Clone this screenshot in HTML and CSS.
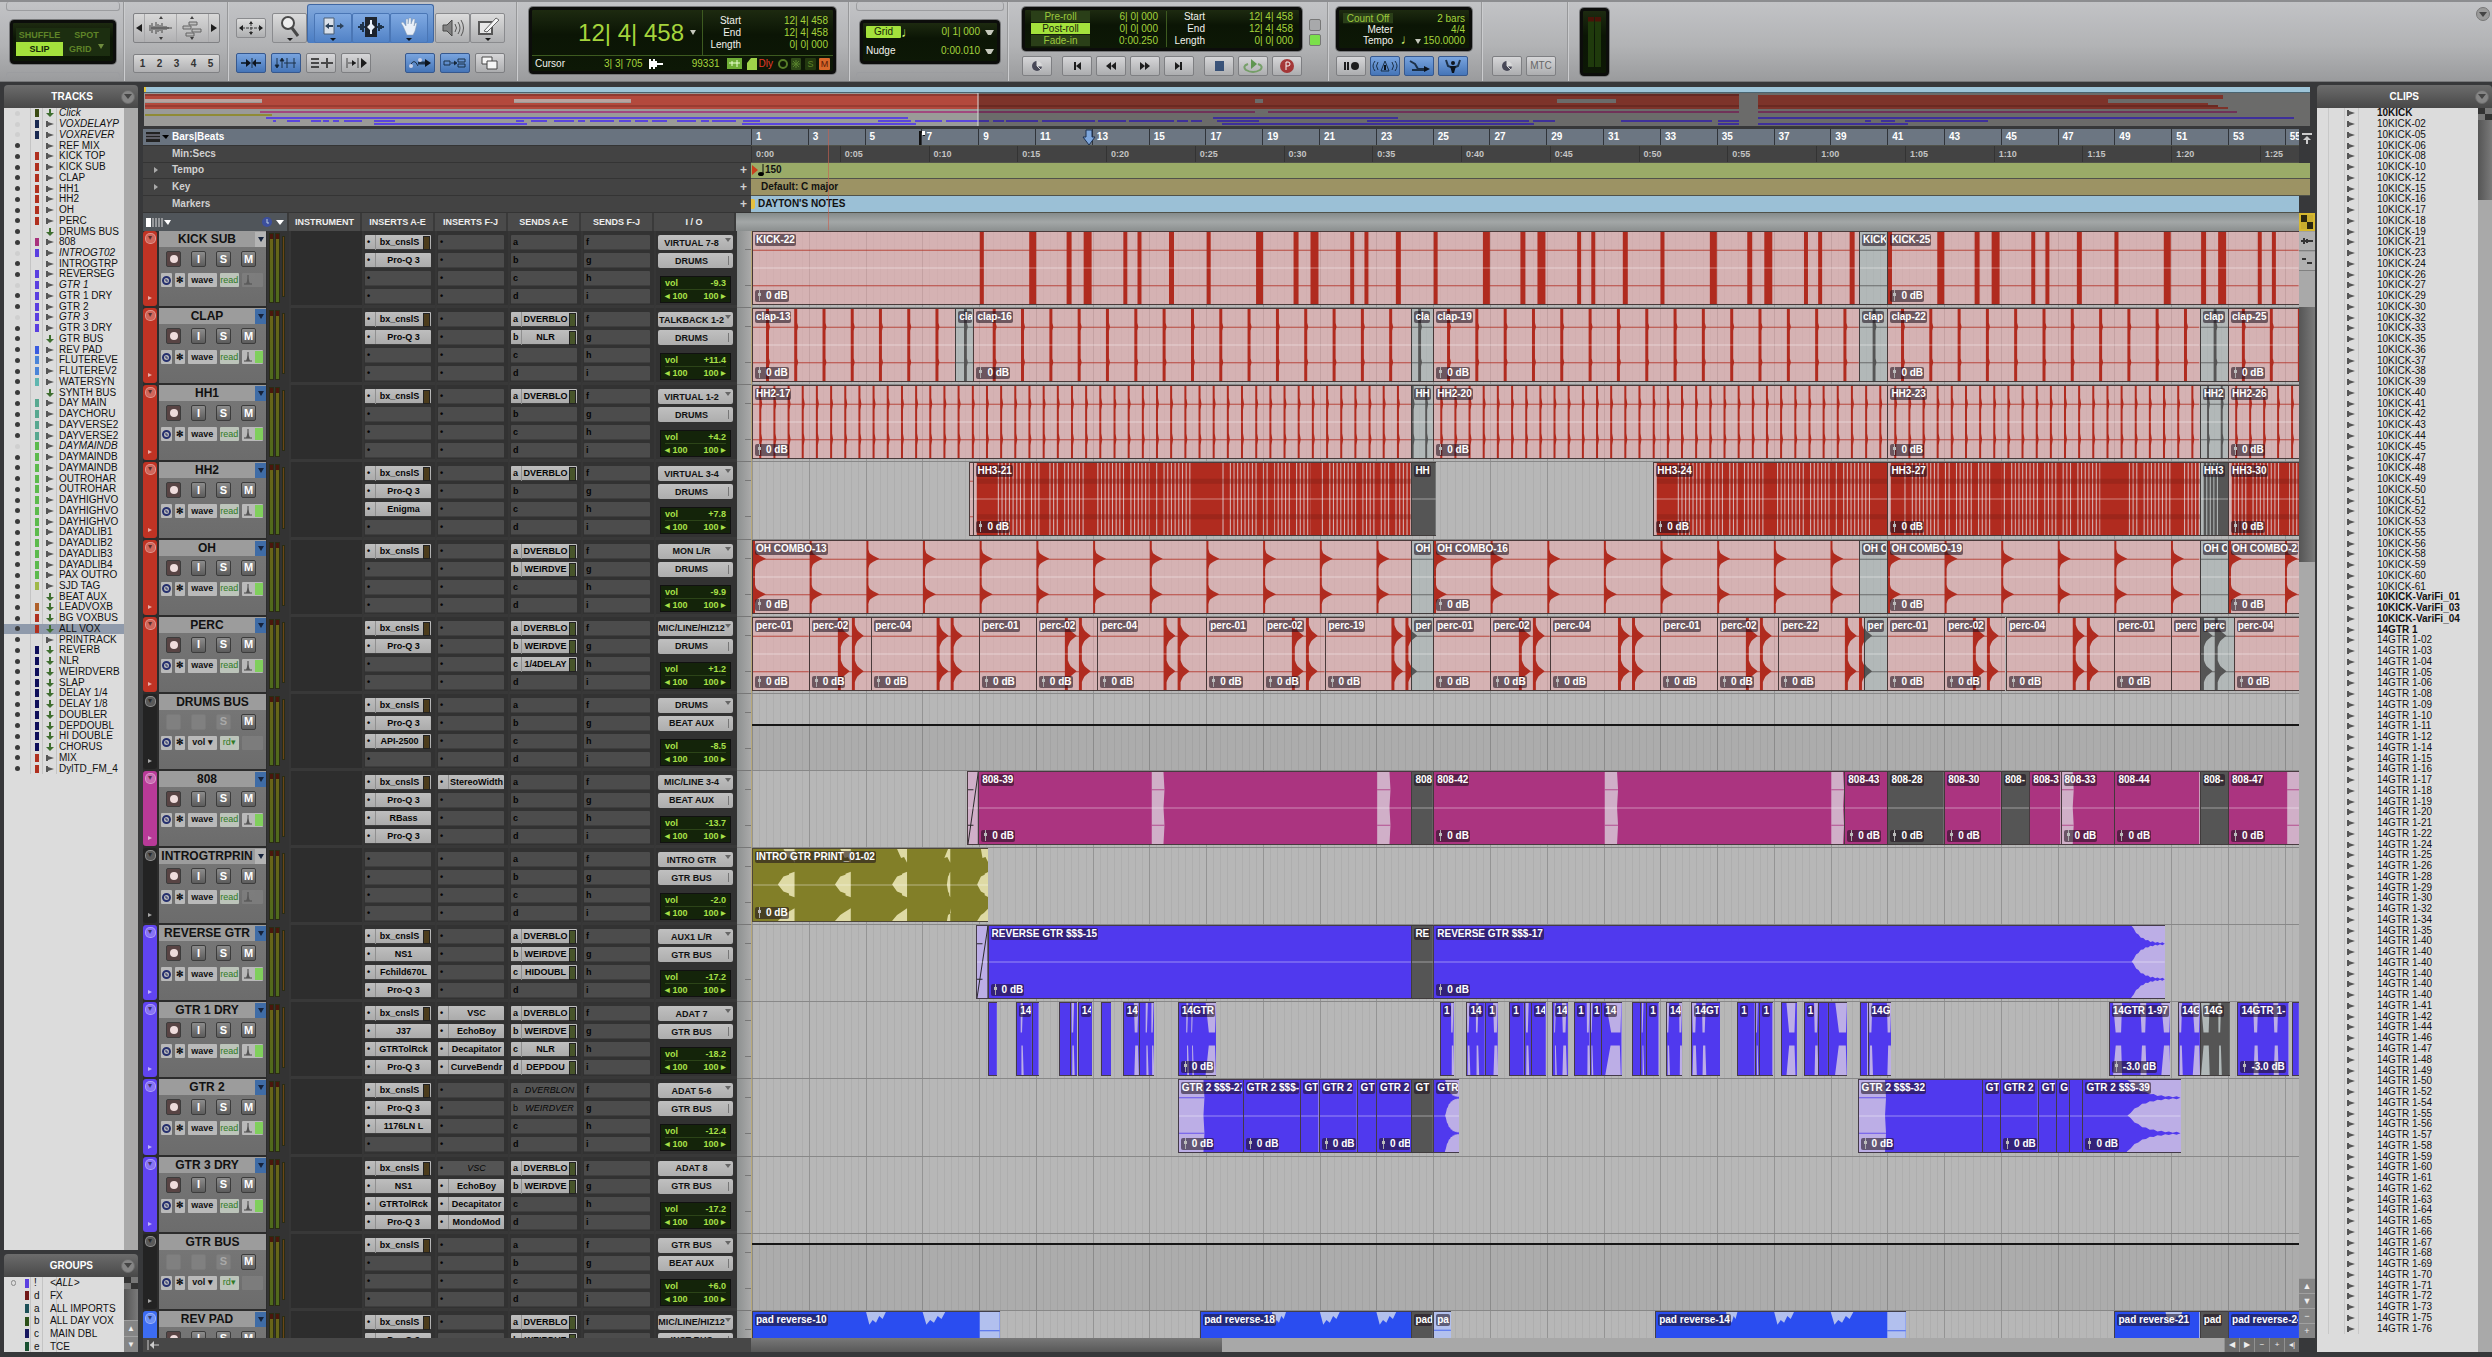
FILE: index.html
```html
<!DOCTYPE html>
<html lang="en">
<head>
<meta charset="utf-8">
<title>Edit window</title>
<link rel="stylesheet" href="styles.css">
</head>
<body>
<header class="toolbar">
  <section class="tb tb-modes framed">
    <div class="lcd modes">
      <button>SHUFFLE</button><button>SPOT</button>
      <button class="on">SLIP</button><button>GRID <i class="caret"></i></button>
    </div>
  </section>
  <section class="tb tb-zoom">
    <div class="btn-strip tall">
      <button aria-label="Zoom out"><svg width="6" height="8"><path d="M6 0v8L0 4z"/></svg></button>
      <button class="wide" aria-label="Audio zoom"><svg width="24" height="24" viewBox="0 0 24 24"><path d="M12 0l2 3h-4zM12 24l2-3h-4z" opacity=".8"/><path d="M1 9v6M3 7v10M5 10v4M7 6v12M9 8v8M11 9v6M13 7v10M15 10v4M17 10v4M19 11v2M2 12h21" stroke="#333" fill="none"/></svg></button>
      <button class="wide" aria-label="MIDI zoom"><svg width="24" height="24" viewBox="0 0 24 24"><path d="M12 0l2 3h-4zM12 24l2-3h-4z" opacity=".8"/><path d="M9 6h8v3H9zM3 10h8v3H3zM12 13h9v3h-9zM6 17h8v3H6z" fill="#bbb" stroke="#555"/></svg></button>
      <button aria-label="Zoom in"><svg width="6" height="8"><path d="M0 0v8l6-4z"/></svg></button>
    </div>
    <div class="btn-strip presets"><button>1</button><button>2</button><button>3</button><button>4</button><button>5</button></div>
  </section>
  <section class="tb tb-tools">
    <div class="tool-row">
      <button class="tool small" aria-label="Zoom toggle"><svg width="24" height="14" viewBox="0 0 24 14"><path d="M0 7l4-3v6zM24 7l-4-3v6zM12 0l2 3h-4zM12 14l2-3h-4z"/><path d="M3 7h18M12 2v10" stroke="#222" stroke-dasharray="3 1"/></svg></button>
      <button class="tool" aria-label="Zoomer"><svg width="24" height="26" viewBox="0 0 24 26"><circle cx="10" cy="8" r="6" fill="#f4f4f4" stroke="#333" stroke-width="2"/><path d="M14 13l6 8" stroke="#333" stroke-width="3"/><path d="M9 23h6l-3 3z"/></svg></button>
      <div class="smart">
        <button class="tool blue" aria-label="Trim"><svg width="26" height="26" viewBox="0 0 26 26"><path d="M4 3h10v16H4z" fill="#eee" stroke="#456"/><path d="M5 11l4-3v2h4v2H9v2zM24 11l-4-3v2h-3v2h3v2z" fill="#234"/><path d="M10 23h6l-3 3z"/></svg></button>
        <button class="tool blue" aria-label="Selector"><svg width="26" height="26" viewBox="0 0 26 26"><path d="M7 2h12v20H7z" fill="#111"/><path d="M0 12h7M19 12h7M3 9v6M5 7v10M21 8v8M23 10v4" stroke="#123" stroke-width="2"/><path d="M12 5h2v4l3 3-3 3v4h-2v-4l-3-3 3-3z" fill="#fff"/></svg></button>
        <button class="tool blue" aria-label="Grabber"><svg width="26" height="26" viewBox="0 0 26 26"><path d="M7 11L5 8l2-1 3 4V4h2v5l1-6h2v6l2-5h2l-1 7 1-3h2l-2 8-2 4h-6z" fill="#fff" stroke="#89a" stroke-width=".5"/><path d="M10 23h6l-3 3z"/></svg></button>
      </div>
      <button class="tool" aria-label="Scrubber"><svg width="24" height="24" viewBox="0 0 24 24"><path d="M2 9h4l5-5v16l-5-5H2z" fill="#777" stroke="#333"/><path d="M14 8q3 4 0 8M17 6q4 6 0 12M20 4q5 8 0 16" fill="none" stroke="#444"/></svg></button>
      <button class="tool" aria-label="Pencil"><svg width="26" height="26" viewBox="0 0 26 26"><path d="M4 7h13v12H4z" fill="#eee" stroke="#444" stroke-width="2"/><path d="M9 16L21 3l3 2-12 12z" fill="#fff" stroke="#555"/><path d="M10 23h6l-3 3z"/></svg></button>
    </div>
    <div class="tool-row second">
      <button class="key blue" aria-label="Tab to transients"><svg width="24" height="12"><path d="M2 6h7M14 6h8" stroke="#123" stroke-width="2"/><path d="M7 2l5 4-5 4zM17 2l-4 4 4 4z"/><path d="M13 1v10" stroke="#123"/></svg></button>
      <button class="key blue" aria-label="Link timeline"><svg width="24" height="12"><path d="M3 1v9M8 2v9M13 1v10M20 1v10" stroke="#123"/><path d="M1 8h4l-2 3zM6 4h4L8 1zM10 6h12" stroke="#123"/></svg></button>
      <button class="key" aria-label="Link track"><svg width="24" height="12"><path d="M2 2h8M2 6h8M2 10h8M18 1v10M12 6h12" stroke="#333" stroke-width="2"/></svg></button>
      <button class="key" aria-label="Insertion follows playback"><svg width="24" height="12"><path d="M3 1v10M14 1v10M4 6h8" stroke="#333"/><path d="M8 3l4 3-4 3zM17 1l6 5-6 5z"/></svg></button>
      <button class="key blue apart" aria-label="Automation follows edit"><svg width="24" height="12"><path d="M2 9q4-9 8 0" fill="none" stroke="#123"/><path d="M10 6h8" stroke="#123" stroke-width="3"/><path d="M17 2l6 4-6 4z"/><circle cx="3" cy="9" r="2" fill="#dde"/><circle cx="12" cy="3" r="2" fill="#dde"/></svg></button>
      <button class="key blue" aria-label="Mirrored editing"><svg width="24" height="12"><path d="M1 4h6v4H1zM15 2h7v3h-7zM15 7h7v3h-7z" fill="none" stroke="#123"/><path d="M8 6h5M11 4l3 2-3 2" stroke="#123"/></svg></button>
      <button class="key" aria-label="Layered editing"><svg width="20" height="14"><path d="M2 1h10v7H2z" fill="#fff" stroke="#333"/><path d="M7 5h10v8H7z" fill="#fff" stroke="#333"/></svg></button>
    </div>
  </section>
  <section class="tb tb-counter">
    <div class="lcd counter">
      <div class="main-count"><b>12| 4| 458</b><i class="caret"></i></div>
      <dl class="range"><dt>Start</dt><dd>12| 4| 458</dd><dt>End</dt><dd>12| 4| 458</dd><dt>Length</dt><dd>0| 0| 000</dd></dl>
      <div class="cursor-row">
        <span class="white">Cursor</span><span class="cur">3| 3| 705</span>
        <svg width="15" height="12"><path d="M0 1h2v10H0zM2 3h2v6H2zM4 1h2v10H4zM6 3h2v6H6zM8 5h6v2H8z" fill="#fff"/></svg>
        <span class="level">99331</span>
        <svg width="30" height="14"><path d="M0 1h15v11H0z" fill="#6fae36"/><path d="M2 6h11M5 4v5M10 3v7" stroke="#eaffd0"/><path d="M24 1h6v12H20V6z" fill="#9fd44a"/></svg>
        <span class="dly">Dly</span>
        <svg width="24" height="14"><circle cx="5" cy="7" r="4" fill="none" stroke="#567d28" stroke-width="2"/><rect x="13" y="1" width="10" height="12" rx="1" fill="#2f4a18"/><path d="M18 3v8M14 7h8M15 4l6 6M21 4l-6 6" stroke="#58822c"/></svg>
        <span class="solo">S</span><span class="solo mute">M</span>
      </div>
    </div>
  </section>
  <section class="tb tb-grid framed">
    <div class="lcd gridnudge">
      <span class="chip on">Grid</span><span class="note">♩</span><output>0| 1| 000</output><i class="caret"></i>
      <span class="white">Nudge</span><span></span><output>0:00.010</output><i class="caret"></i>
    </div>
  </section>
  <section class="tb tb-transport">
    <div class="transport-top">
      <div class="lcd rolls">
        <button>Pre-roll</button><output class="ruled">6| 0| 000</output><span class="white">Start</span><output>12| 4| 458</output>
        <button class="on">Post-roll</button><output class="ruled">0| 0| 000</output><span class="white">End</span><output>12| 4| 458</output>
        <button>Fade-in</button><output class="ruled">0:00.250</output><span class="white">Length</span><output>0| 0| 000</output>
      </div>
      <div class="lamps"><i></i><i class="lit"></i></div>
    </div>
    <div class="keys">
      <button class="key first" aria-label="Online"><svg width="12" height="12"><circle cx="6" cy="6" r="5" fill="#334"/><path d="M6 6V1a5 5 0 015 5zM6 6l4 4" fill="#ddd" stroke="#ddd"/></svg></button>
      <button class="key" aria-label="Return to zero"><svg width="12" height="12"><path d="M3 2h2v8H3zM10 2v8L5 6z"/></svg></button>
      <button class="key" aria-label="Rewind"><svg width="12" height="12"><path d="M6 2v8L1 6zM11 2v8L6 6z"/></svg></button>
      <button class="key" aria-label="Fast forward"><svg width="12" height="12"><path d="M1 2v8l5-4zM6 2v8l5-4z"/></svg></button>
      <button class="key" aria-label="Go to end"><svg width="12" height="12"><path d="M7 2h2v8H7zM2 2v8l5-4z"/></svg></button>
      <button class="key later" aria-label="Stop"><svg width="12" height="12"><path d="M2 1h9v10H2z" fill="#23406c"/></svg></button>
      <button class="key" aria-label="Play"><svg width="22" height="16"><path d="M6 6Q0 8 4 12q7 4 14 0q4-4-2-6" fill="none" stroke="#6a9a5a" stroke-width="2"/><path d="M9 1v10l6-5z" fill="#4e8e3c"/></svg></button>
      <button class="key" aria-label="Record"><svg width="16" height="16"><circle cx="8" cy="8" r="7" fill="#a02020"/><path d="M7 12V4h2q2 0 2 2t-2 2H7" fill="none" stroke="#fff"/></svg></button>
    </div>
  </section>
  <section class="tb tb-count">
    <div class="lcd count">
      <button>Count Off</button><output>2 bars</output>
      <span class="white">Meter</span><output>4/4</output>
      <span class="white">Tempo</span><output><span class="note">♩</span><i class="caret"></i> 150.0000</output>
    </div>
    <div class="keys">
      <button class="key" aria-label="Wait for note"><svg width="18" height="12"><path d="M2 2h2v8H2zM5 2h2v8H5z"/><circle cx="13" cy="6" r="4"/></svg></button>
      <button class="key blue" aria-label="Metronome"><svg width="26" height="14"><path d="M13 2l4 10H9zM6 3q-3 4 0 8M3 2q-4 5 0 10M20 3q3 4 0 8M23 2q4 5 0 10" fill="none" stroke="#123"/><path d="M12 6h2v5h-2z"/></svg></button>
      <button class="key blue" aria-label="Count off"><svg width="22" height="14"><path d="M2 2l5 3 3 5h7M4 11h14" fill="none" stroke="#123" stroke-width="2"/><path d="M16 7l6 3-6 3z"/></svg></button>
      <button class="key blue" aria-label="Conductor"><svg width="20" height="16"><circle cx="10" cy="5" r="2"/><path d="M3 2l2 6 5 2 5-2 2-6" fill="none" stroke="#123" stroke-width="2"/><path d="M7 8h6l-2 7H9z"/></svg></button>
    </div>
  </section>
  <section class="tb tb-sync">
    <div class="keys">
      <button class="key" aria-label="External clock"><svg width="12" height="12"><circle cx="6" cy="6" r="5" fill="#334"/><path d="M6 6V1a5 5 0 015 5zM6 6l4 4" fill="#ddd" stroke="#ddd"/></svg></button>
      <button class="key mtc">MTC</button>
    </div>
  </section>
  <section class="tb tb-meter"><div class="lcd master"><i></i><i></i></div></section>
  <button class="round" aria-label="Toolbar menu"></button>
</header>

<main class="workspace">
  <aside class="side">
    <section class="panel grow">
      <h2>TRACKS<button class="round" aria-label="Tracks menu"></button></h2>
      <div class="panel-body">
        <ul class="track-list" id="trackList"></ul>
        <div class="vbar"></div>
      </div>
    </section>
    <section class="panel">
      <h2>GROUPS<button class="round" aria-label="Groups menu"></button></h2>
      <div class="panel-body groups">
        <ul class="group-list" id="groupList"></ul>
        <div class="vbar"><i class="az"></i><span class="thumb short"></span><button aria-label="Scroll up">▲</button><button aria-label="Scroll down">▼</button></div>
      </div>
    </section>
  </aside>

  <section class="edit">
    <div class="universe" id="universe"></div>
    <div class="rulers">
      <div class="ruler-names">
        <div class="sel"><svg width="24" height="12"><path d="M1 1h14v10H1z" fill="#222"/><path d="M1 4h14M1 7h14" stroke="#99a"/><path d="M17 4h7l-3 4z"/></svg>Bars|Beats</div>
        <div>Min:Secs</div>
        <div><i class="tri"></i>Tempo<b>+</b></div>
        <div><i class="tri"></i>Key<b>+</b></div>
        <div>Markers<b>+</b></div>
      </div>
      <div class="ruler-lines" id="rulers">
        <div class="r-bars" id="bars"></div>
        <div class="r-time" id="times"></div>
        <div class="r-tempo"><svg width="14" height="14"><path d="M1 2l6 5-6 5z" fill="#c8401c"/><path d="M12 1v10" stroke="#111"/><ellipse cx="10" cy="11" rx="3" ry="2"/></svg>150</div>
        <div class="r-key">Default: C major</div>
        <div class="r-markers"><i></i>DAYTON'S NOTES</div>
      </div>
      <div class="ruler-end"><svg width="10" height="12"><path d="M0 0h10v2H0zM5 3l4 4H6v4H4V7H1z"/></svg></div>
    </div>
    <div class="col-heads">
      <div class="views"><svg width="26" height="11"><path d="M1 1h5v9H1z" fill="#fff"/><path d="M8 1v9M11 1v9M14 1v9M17 1v9" stroke="#ddd"/><path d="M19 3h7l-3 5z" fill="#fff"/></svg><svg width="24" height="12"><circle cx="6" cy="6" r="5" fill="#3c4f9c"/><path d="M6 3v4h2" stroke="#bcd" fill="none"/><path d="M15 4h8l-4 5z" fill="#fff"/></svg></div>
      <div>INSTRUMENT</div><div>INSERTS A-E</div><div>INSERTS F-J</div><div>SENDS A-E</div><div>SENDS F-J</div><div>I / O</div>
      <div class="strip-top"></div>
      <div class="az yellow"></div>
    </div>
    <div class="arrange">
      <div class="tracks" id="tracks"></div>
      <div class="vbar main-v">
        <button aria-label="Audio zoom"><svg width="12" height="10"><path d="M0 5h12M3 2v6M6 3v4" stroke="#333" stroke-width="2"/></svg></button>
        <button aria-label="MIDI zoom"><svg width="12" height="10"><path d="M1 3h4M6 7h5" stroke="#333" stroke-width="2"/></svg></button>
        <span class="gap"></span><span class="thumb long"></span><span class="fill"></span>
        <button aria-label="Scroll up">▲</button><button aria-label="Scroll down">▼</button><button>−</button><button>+</button>
      </div>
    </div>
    <div class="hbar">
      <div class="hleft"><svg width="12" height="10"><path d="M1 0v10M3 5h9" stroke="#ccc"/><path d="M7 1L3 5l4 4z" fill="#ccc"/></svg></div>
      <div class="htrack"><span class="hthumb"></span></div>
      <div class="hbtns"><button aria-label="Scroll left">◀</button><button aria-label="Scroll right">▶</button><button>−</button><button>+</button><button aria-label="Track size">◂|</button></div>
    </div>
  </section>

  <aside class="panel clips">
    <h2>CLIPS<button class="round" aria-label="Clips menu"></button></h2>
    <div class="panel-body">
      <ul class="clip-list" id="clipList"></ul>
      <div class="vbar"><i class="az"></i><span class="thumb"></span></div>
    </div>
  </aside>
</main>
<script src="app.js"></script>
</body>
</html>
```

FILE: styles.css
```css
* { box-sizing: border-box; }
html, body { height: 100%; }
body {
  margin: 0;
  display: flex;
  flex-direction: column;
  background: #37383a;
  color: #111;
  font: 10px/12px "Liberation Sans", Arial, sans-serif;
  overflow: hidden;
}
button, select, output { font: inherit; color: inherit; }
button, select { margin: 0; padding: 0; border: 0; background: none; appearance: none; border-radius: 0; white-space: nowrap; }
ul, dl, dd, h2 { margin: 0; padding: 0; list-style: none; }
svg { display: block; flex: none; }

/* toolbar */
.toolbar {
  position: relative;
  display: flex;
  flex: none;
  height: 82px;
  border-top: 2px solid #8c8d90;
  border-bottom: 1px solid #77787a;
  background: linear-gradient(#c2c3c6, #b2b3b5 55%, #9a9b9d);
}
.tb { flex: none; border-right: 1px solid #97989a; box-shadow: 1px 0 #cbccce; padding-top: 5px; }
.tb-modes { width: 124px; padding: 0 7px 0 10px; }
.tb-zoom { width: 104px; padding: 11px 7px 0 9px; }
.tb-tools { width: 289px; padding: 2px 0 0 8px; }
.tb-counter { width: 332px; padding-left: 12px; }
.tb-grid { width: 159px; padding: 0 7px 0 11px; }
.tb-transport { width: 320px; padding-left: 14px; }
.tb-count { width: 154px; padding-left: 8px; }
.tb-sync { width: 86px; padding: 54px 0 0 10px; }
.tb-meter { padding: 6px 0 0 12px; border: 0; box-shadow: none; }
.toolbar button > svg { opacity: .85; }
.framed { display: flex; flex-direction: column; justify-content: space-between; }
.framed::before, .framed::after { content: ""; height: 8px; border: 1px solid #9c9da0; border-radius: 3px; margin: 0 -4px; }
.framed::before { border-top: 0; }
.framed::after { border-bottom: 0; }

.lcd {
  border: 3px solid #0c0d0b;
  border-radius: 4px;
  box-shadow: 0 0 0 1px #77787a;
  background: linear-gradient(#1d2a10, #0b1505 40%, #0d1806);
  color: #a5d43c;
}
.white { color: #f2f2ec; }
.caret { display: inline-block; border: 3px solid transparent; border-top: 5px solid #c6c9bd; border-bottom: 0; }
.modes { height: 44px; padding: 5px 3px; display: grid; grid-template-columns: 1fr 1fr; grid-template-rows: 1fr 1fr; font-size: 9px; font-weight: bold; }
.modes button { color: #5f8428; background: #1c2e10; }
.modes .on, .rolls .on, .chip.on { background: #a4e23c; color: #16250a; }
.modes .caret { margin-left: 4px; border-top-color: #6f8b3e; vertical-align: 3px; }

.btn-strip { display: flex; border: 1px solid #808184; border-radius: 2px; background: linear-gradient(#d8d8d8, #b0b0b2); }
.btn-strip button { flex: 1; display: grid; place-items: center; border-right: 1px solid #a8a8aa; }
.btn-strip button:last-child { border: 0; }
.btn-strip .wide { flex: 3; }
.tall { height: 30px; }
.presets { height: 19px; margin-top: 11px; font-weight: bold; color: #333; }
.presets button { border: 0; }
.tool-row { display: flex; align-items: flex-end; height: 39px; }
.tool { display: grid; place-items: center; width: 35px; height: 30px; border: 1px solid #8a8b8e; border-radius: 2px; background: linear-gradient(#dcdcdc, #aeafb1); }
.tool.small { width: 30px; height: 20px; margin: 0 6px 5px 0; }
.tool.blue { width: 38px; background: linear-gradient(#7fa9e2, #5182c6); border-color: #4a76b5; }
.smart { display: flex; justify-content: center; align-items: flex-end; width: 127px; height: 39px; margin-right: 1px; border: 1px solid #3f67a3; border-bottom-width: 0; border-radius: 3px; background: linear-gradient(#83a9dc, #4a7dc4); }
.key { display: grid; place-items: center; width: 30px; height: 20px; border: 1px solid #7e7f82; border-radius: 2px; background: linear-gradient(#d6d6d8, #acadaf); color: #333; }
.key.blue { background: linear-gradient(#79a4de, #4575b8); border-color: #36588e; }
.second { height: 20px; margin-top: 10px; gap: 5px; }
.second .apart { margin-left: 29px; }
.keys { display: flex; gap: 4px; margin-top: 5px; }
.tb-transport .first { margin-right: 6px; }
.tb-transport .later { margin-left: 6px; }
.tb-sync .keys { margin: 0; }
.mtc { color: #666; }

.counter { width: 307px; height: 67px; display: grid; grid-template-columns: 171px 1fr; grid-template-rows: 45px 1fr; }
.main-count { display: flex; align-items: center; justify-content: flex-end; gap: 6px; padding-right: 6px; border-right: 1px solid #3d5a20; }
.main-count b { font-size: 24px; font-weight: normal; }
.range { display: grid; grid-template-columns: 38px 1fr; grid-auto-rows: 12px; align-content: center; text-align: right; padding-right: 5px; }
.range dt { color: #f2f2ec; }
.cursor-row { grid-column: 1 / 3; display: flex; align-items: center; border-top: 1px solid #3d5a20; padding: 0 3px; }
.cur { margin: 0 6px 0 auto; }
.level { width: 56px; text-align: right; margin-right: 7px; }
.dly { margin: 0 5px 0 2px; color: #e63a2a; }
.solo { width: 11px; height: 12px; margin-left: 3px; border-radius: 1px; text-align: center; color: #5f8428; background: #23380f; font-size: 9px; }
.solo.mute { background: #d8672a; color: #5a1808; }
.gridnudge { height: 44px; padding: 0 3px; display: grid; grid-template-columns: 35px 14px 1fr 14px; grid-template-rows: 1fr 1fr; align-items: center; text-align: right; }
.gridnudge .chip { height: 12px; border-radius: 1px; text-align: center; }
.gridnudge .white { text-align: left; }
.gridnudge .caret { margin-left: 5px; }
.note { font-size: 14px; color: #c9ea6a; }
.transport-top { display: flex; gap: 7px; }
.rolls { width: 280px; height: 44px; padding: 1px 6px; display: grid; grid-template-columns: 59px 77px 38px 1fr; grid-template-rows: repeat(3, 12px); text-align: right; }
.rolls button, .count button { background: #2a3f18; border-bottom: 1px solid #14200a; color: #9cc83c; line-height: 11px; }
.ruled { border-right: 1px solid #3d5a20; padding-right: 8px; }
.lamps { display: grid; gap: 3px; align-content: center; padding-top: 6px; }
.lamps i { width: 12px; height: 12px; border: 1px solid #777; border-radius: 2px; background: #a8a9ab; }
.lamps .lit { background: #7be04a; }
.count { width: 136px; height: 44px; padding: 3px 4px; display: grid; grid-template-columns: 50px 1fr; grid-template-rows: repeat(3, 11px); text-align: right; line-height: 11px; }
.count .note { line-height: 8px; }
.master { width: 29px; height: 68px; padding: 6px 4px; display: flex; gap: 1px; justify-content: center; }
.master i { width: 6px; background: linear-gradient(#4a1208 8%, #1f3a0c 10%); }
.round { width: 14px; height: 14px; border-radius: 7px; border: 1px solid #777; background: #9a9a9a; display: grid; place-items: center; }
.round::before { content: ""; border: 4px solid transparent; border-top: 5px solid #444; border-bottom: 0; }
.toolbar > .round { margin: 5px 2px 0 auto; }

/* panels */
.workspace { flex: 1; min-height: 0; display: flex; padding: 3px 0 5px 4px; }
.side { width: 134px; flex: none; margin-right: 5px; display: flex; flex-direction: column; gap: 4px; }
.panel { display: flex; flex-direction: column; }
.panel.grow { flex: 1; min-height: 0; }
.panel h2 { flex: none; height: 23px; display: flex; align-items: center; justify-content: flex-end; font-size: 10px; color: #fff; border-radius: 4px 4px 0 0; background: linear-gradient(#6c6c6c, #484848); }
.panel h2 .round { margin: 0 3px 0 28px; background: #858585; border-color: #6a6a6a; }
.clips h2 .round { margin-left: 56px; }
.panel-body { flex: 1; min-height: 0; display: flex; background: #dcdcdc; overflow: hidden; }
.groups { height: 75px; flex: none; }
.vbar { display: flex; flex-direction: column; width: 14px; flex: none; background: #a9a9a9; }
.vbar button { height: 16px; flex: none; background: #858585; border-top: 1px solid #a0a0a0; color: #eee; font-size: 8px; line-height: 14px; text-align: center; }
.thumb { display: block; flex: none; height: 80px; background: linear-gradient(90deg, #555, #7a7a7a); }
.thumb.short { flex: 1; height: auto; }
.az { flex: none; height: 12px; background: conic-gradient(#777 25%, #333 0 50%, #777 0 75%, #333 0); }
.track-list, .group-list, .clip-list { flex: 1; display: grid; align-content: start; }
.track-list { height: 666px; grid-auto-rows: 1fr; }
.track-list, .group-list { background: linear-gradient(90deg, transparent 26px, #c4c4c4 26px 27px, transparent 27px 38px, #c4c4c4 38px 39px, transparent 39px 52px, #c4c4c4 52px 53px, transparent 53px); }
.panel.grow .panel-body { align-items: flex-start; }
.panel.grow .vbar { align-self: stretch; }
.track-list li { display: grid; grid-template-columns: 26px 13px 13px 1fr; align-items: center; justify-items: center; min-height: 0; line-height: 10px; }
.track-list span { justify-self: start; padding-left: 3px; white-space: nowrap; }
.track-list .off span { font-style: italic; }
.track-list .off .dot { background: #cfcfcf; }
.track-list .sel { background: #8f9aab; }
.dot { width: 5px; height: 5px; border-radius: 3px; background: #3a3a3a; }
.tag { width: 4px; height: 8px; }
.group-list { grid-auto-rows: 1fr; height: 76px; }
.group-list li { display: grid; grid-template-columns: 19px 11px 16px 1fr; align-items: center; white-space: nowrap; }
.group-list i { width: 4px; height: 9px; margin-left: 2px; }
.group-list .ring { width: 5px; height: 6px; border: 1px solid #888; border-radius: 3px; margin-left: 7px; }
.clips { width: 175px; flex: none; margin-left: 2px; }
.clip-list { grid-auto-rows: 1fr; height: 1226px; background: linear-gradient(90deg, transparent 11px, #c8c8c8 11px 12px, transparent 12px 27px, #c8c8c8 27px 28px, transparent 28px 41px, #c8c8c8 41px 42px, transparent 42px); }
.clip-list li { display: grid; grid-template-columns: 60px 1fr; align-items: center; line-height: 10px; white-space: nowrap; min-height: 0; }
.clip-list svg { margin-left: 30px; }
.clip-list .whole { font-weight: bold; }

/* edit window */
.edit { flex: 1; min-width: 0; display: flex; flex-direction: column; padding-top: 2px; }
.universe { height: 39px; flex: none; margin: 0 5px 3px 1px; }
.universe svg { width: 100%; height: 100%; }
.rulers { display: flex; flex: none; height: 84px; color: #d0d0d0; font-weight: bold; }
.ruler-names { width: 608px; display: grid; grid-template-rows: repeat(5, 1fr); flex: none; }
.ruler-names div { position: relative; display: flex; align-items: center; padding-left: 29px; background: #434343; border-bottom: 1px solid #343434; }
.ruler-names .sel { background: #69737f; padding-left: 2px; gap: 3px; color: #fff; }
.ruler-names b { margin-left: auto; padding-right: 4px; font-size: 12px; }
.tri { position: absolute; left: 11px; border: 3px solid transparent; border-left: 4px solid #aaa; border-right: 0; }
.ruler-lines { position: relative; flex: 1; min-width: 0; display: grid; grid-template-rows: repeat(5, 1fr); }
.ruler-lines > div { position: relative; overflow: hidden; border-bottom: 1px solid #50524a; }
.ruler-lines .r-bars { background: #6c7682; }
.ruler-lines .r-time { background: #434343; }
.r-bars span, .r-time span { position: absolute; top: 0; bottom: 0; padding: 2px 0 0 4px; border-left: 1px solid #30343a; color: #fff; }
.r-time span { color: #c4c4c4; font-size: 9px; border-color: #333; }
.r-tempo, .r-key, .r-markers { color: #111; display: flex; align-items: center; margin-right: -11px; }
.r-tempo { background: #9aab68; }
.r-key { background: #9c9364; padding-left: 10px; }
.r-markers { background: #9bc0d6; gap: 3px; margin-right: 0; }
.r-markers i { width: 4px; height: 10px; border-radius: 0 2px 2px 0; background: #e6c040; }
.playhead { position: absolute; top: 0; bottom: -17px; width: 1px; background: #c86050a0; }
.start-arrow { position: absolute; top: 0; margin-left: -7px; }
.ruler-end { flex: none; width: 16px; padding: 4px 0 0 3px; }
.ruler-end svg { fill: #ccc; }

.track { display: grid; min-height: 0; grid-template-columns: 14px 110px 22px repeat(5, 73px) 83px 14px minmax(0, 1fr); }
.col-heads { display: grid; flex: none; height: 18px; grid-template-columns: 146px repeat(5, 73px) 82px minmax(0, 1fr) 16px; color: #eee; font-size: 9px; font-weight: bold; background: #4a4a4a; }
.col-heads > div { display: grid; place-items: center; border-right: 2px solid #3a3a3a; }
.col-heads .views { display: flex; justify-content: space-between; padding: 0 2px; background: #50555a; }
.col-heads .strip-top { border: 0; background: linear-gradient(#858b8b, #a3a7a7 50%, #8b8f8f); }
.col-heads .yellow { height: 18px; border: 2px solid #d6b82e; background: conic-gradient(#c9ad2e 25%, #2b2710 0 50%, #c9ad2e 0 75%, #2b2710 0); }

.arrange { flex: 1; min-height: 0; display: flex; overflow: hidden; }
.tracks { flex: 1; min-width: 0; align-self: flex-start; height: 1157px; display: grid; grid-template-rows: repeat(15, 1fr); --bars: 54.5; background: #2c2c2c; }
.strip { margin: 0 0 2px; border-radius: 3px; display: flex; flex-direction: column; justify-content: space-between; align-items: center; padding: 2px 0 6px; }
.strip::before { content: "▾"; width: 9px; height: 9px; border-radius: 5px; background: #ffffff40; border: 1px solid #ffffff50; color: #00000090; font-size: 8px; line-height: 7px; text-align: center; }
.strip::after { content: ""; border: 2px solid transparent; border-left: 4px solid #ffffff99; border-right: 0; }
.head { margin: 0 1px 2px 2px; background: linear-gradient(#787878, #6c6c6c); }
.name { display: flex; height: 16px; padding-top: 1px; background: #9c9c9c; font-size: 12px; font-weight: bold; line-height: 14px; }
.name span { flex: 1; text-align: center; white-space: nowrap; }
.name button { width: 11px; background: #3f6ca6; display: grid; place-items: center; }
.name button::before { content: ""; border: 3px solid transparent; border-top: 5px solid #16233c; border-bottom: 0; }
.name .plain { background: #b4b4b4; }
.name .none { display: none; }
.rec-row { display: flex; gap: 10px; padding: 4px 7px 0; }
.rec-row button { width: 15px; height: 16px; border: 1px solid #3c3c3c; border-radius: 2px; background: linear-gradient(#8c8c8c, #5c5c5c); color: #fff; font-size: 11px; font-weight: bold; line-height: 13px; }
.rec-row .rec { background: #584444; display: grid; place-items: center; }
.rec-row .rec::before { content: ""; width: 8px; height: 8px; border-radius: 4px; background: #f0dcdc; }
.rec-row .dim { border-color: #7a7a7a; background: #808080; color: #a8a8a8; }
.auto-row { display: flex; gap: 3px; padding: 6px 3px 0 2px; font-size: 9px; font-weight: bold; }
.auto-row button, .auto-row select { height: 14px; background: #b9b9b9; border-radius: 1px; text-align: center; line-height: 13px; }
.auto-row .ic { width: 11px; display: grid; place-items: center; }
.auto-row .view { width: 30px; }
.auto-row .mode { width: 20px; color: #2f7a24; font-weight: normal; background: #bcc4ba; }
.auto-row .elastic { width: 22px; display: flex; align-items: center; justify-content: space-between; padding-left: 2px; }
.elastic::after { content: ""; width: 8px; height: 12px; background: #80cf5c; }
.auto-row .elastic.dim { background: #808080; opacity: .8; }
.elastic.dim::after { background: none; }
.elastic.blank svg { visibility: hidden; }
.meters { display: grid; grid-template-columns: 5px 5px 4px; column-gap: 1px; padding: 2px 2px 5px; background: #333; }
.meters i { background: linear-gradient(#4a160c 7%, #6a6418 8%, #4e6a1c); border: 1px solid #2a2c14; }
.meters i:last-child { margin: 3px 0 6px 1px; background: #6b4616; }
.cell { border-left: 2px solid #363636; border-bottom: 3px solid #383838; background: #323232; padding: 4px 4px 0 1px; display: grid; grid-auto-rows: 15px; gap: 3px; align-content: start; }
.cell.void { background: #2d2d2d; }
.slot { display: grid; grid-template-columns: 11px 1fr 8px; height: 15px; border-radius: 1px; background: #4c4c4c; border-bottom: 1px solid #3e3e3e; color: #050505; font-size: 9px; font-weight: bold; line-height: 14px; text-align: left; }
.slot i { font-style: normal; padding-left: 2px; }
.slot.used { background: linear-gradient(#bebebe, #ababab); }
.slot.used i { border-right: 1px solid #8f8f8f; }
.slot span { text-align: center; grid-column: 2 / 4; }
.slot.metered span { grid-column: 2; }
.slot.metered::after { content: ""; width: 5px; height: 12px; margin-top: 1px; background: #4c3c1c; border: 1px solid #222; }
.slot.send.metered::after { background: #47542a; }
.slot.inactive { background: #545454; font-style: italic; font-weight: normal; }
.cell.io { padding: 4px 4px 0 2px; grid-auto-rows: auto; }
.io select { width: 100%; height: 15px; padding-right: 8px; border-radius: 2px; background: linear-gradient(#c0c0c0, #adadad); font-size: 9px; font-weight: bold; text-align: center; text-align-last: center; }
.io label { display: block; position: relative; height: 15px; }
.io label::after { content: ""; position: absolute; right: 2px; top: 3px; border: 3px solid transparent; border-top: 4px solid #666; border-bottom: 0; }
.io .out::after { border: 0; width: 1px; height: 9px; right: 4px; background: #777; }
.level-box { display: grid; grid-template-columns: 1fr 1fr; margin: 5px 2px 0; height: 27px; padding: 0 4px; border: 1px solid #111; background: #14240a; color: #a8e048; font-weight: bold; font-size: 9px; line-height: 12px; }
.level-box span:nth-child(even) { text-align: right; }
.level-box span:nth-child(-n+2) { border-bottom: 1px solid #2c4418; }
.level-box small { font-size: 6px; vertical-align: 1px; }
.scale { border-bottom: 1px solid #777; background: linear-gradient(transparent 18px, #777 18px 19px, transparent 19px 54px, #777 54px 55px, transparent 55px) right / 6px 100% no-repeat, linear-gradient(90deg, #8d9090, #aaa); }
.lane {
  position: relative;
  overflow: hidden;
  border-left: 1px solid #b8a878;
  border-bottom: 1px solid #888;
  background:
    repeating-linear-gradient(90deg, #00000026 0 1px, transparent 1px calc(200% / var(--bars))),
    repeating-linear-gradient(90deg, #0000000d 0 1px, transparent 1px calc(25% / var(--bars))),
    #b7b7b7;
}
.fader { position: absolute; left: 0; right: 0; bottom: 0; border-top: 2px solid #161616; background: #0000000f; }
.clip { position: absolute; top: 0; height: 74px; overflow: hidden; border: 1px solid #1c1414c0; background: var(--light); border-right: 0; }
.clip svg { position: absolute; inset: 0; width: 100%; height: 100%; fill: var(--wave); }
.clip svg .lt { fill: var(--pale); }
.clip svg .mid { stroke: #ffffff70; fill: none; }
.clip svg .chan { stroke: var(--wave); stroke-opacity: .8; fill: none; }
.clip svg .band { fill: #7c1c14; fill-opacity: .35; }
.red { --wave: #b02b1f; --light: #f3adb080; --pale: #d6b2b3; }
.magenta { --wave: #ab3480; --light: #e7b0d480; --pale: #d0afc8; }
.olive { --wave: #827f28; --light: #e4e0a8; --pale: #dedaa4; }
.purple { --wave: #5039ee; --light: #bcaee6; --pale: #bcaee6; }
.blue-clip { --wave: #2a4df0; --light: #b2c0ee; --pale: #b2c0ee; }
.muted { --wave: #555; --light: #aebaba80; --pale: #b0b8b8; }
.clip b { position: absolute; left: 2px; top: 2px; max-width: calc(100% - 3px); overflow: hidden; padding: 0 1px; border-radius: 2px; background: #1c101c90; color: #fff; font-weight: bold; white-space: nowrap; line-height: 12px; }
.clip b.gain { top: auto; bottom: 2px; display: flex; gap: 3px; }
.gain::before { content: ""; width: 7px; height: 11px; background: radial-gradient(circle at 50% 40%, #bbb 0 2px, transparent 2px), linear-gradient(90deg, transparent 3px, #aaa 3px 4px, transparent 4px); flex: none; }

.main-v { width: 16px; }
.main-v button { height: 15px; display: grid; place-items: center; font-size: 9px; }
.main-v button:nth-child(-n+2) { height: 20px; background: #b0b0b0; border-bottom: 1px solid #808080; }
.main-v .gap { height: 36px; }
.thumb.long { height: 255px; }
.fill { flex: 1; }
.hbar { display: flex; height: 14px; flex: none; }
.hleft { width: 608px; padding: 2px 4px; background: #474747; }
.htrack { flex: 1; display: flex; background: #a8a8a8; }
.hthumb { width: 32%; background: linear-gradient(#787878, #585858); }
.hbtns { display: flex; margin-right: 16px; }
.hbtns button { width: 15px; background: #6c6c6c; border-left: 1px solid #909090; color: #eee; font-size: 8px; }
```

FILE: app.js
```js
const BAR = 28.44;      // drawing units per bar
const BARS = 54.5;      // bars across the visible timeline
const pct = n => (n / BARS * 100).toFixed(3) + '%';
const $ = id => document.getElementById(id);

/* ---------- track list ---------- */
const C = { r: '#b0301f', p: '#5a3fe0', n: '#10105a', g: '#5cba4c', t: '#58a890', b: '#3a5ce0', s: '#4a84d8', w: '#5fb6b0', m: '#a8327c', o: '#b0602a', y: '#a0b848', d: '#3a4a12', v: '#182850', _: 'transparent' };
// name | colour | kind (a audio, x aux) | state (o off, s selected)
const LIST = `Click|d|x|o;VOXDELAYP|v|a|o;VOXREVER|v|a|o;REF MIX|_|a;KICK TOP|r|a;KICK SUB|r|a;CLAP|r|a;HH1|r|a;HH2|r|a;OH|r|a;PERC|r|a;DRUMS BUS|_|x;808|m|a;INTROGT02|p|a|o;INTROGTRP|_|a;REVERSEG|p|a;GTR 1|p|a|o;GTR 1 DRY|p|a;GTR 2|p|a;GTR 3|p|a|o;GTR 3 DRY|p|a;GTR BUS|_|x;REV PAD|b|a;FLUTEREVE|s|a;FLUTEREV2|s|a;WATERSYN|w|a;SYNTH BUS|_|x;DAY MAIN|t|a;DAYCHORU|t|a;DAYVERSE2|t|a;DAYVERSE2|t|a;DAYMAINDB|g|a|o;DAYMAINDB|g|a;DAYMAINDB|g|a;OUTROHAR|g|a;OUTROHAR|g|a;DAYHIGHVO|g|a;DAYHIGHVO|g|a;DAYHIGHVO|g|a;DAYADLIB1|g|a;DAYADLIB2|g|a;DAYADLIB3|g|a;DAYADLIB4|g|a;PAX OUTRO|g|a;SJD TAG|y|a;BEAT AUX|_|x;LEADVOXB|o|x;BG VOXBUS|r|x;ALL VOX|r|x|s;PRINTRACK|_|a;REVERB|n|x;NLR|n|x;WEIRDVERB|n|x;SLAP|n|x;DELAY 1/4|n|x;DELAY 1/8|n|x;DOUBLER|n|x;DEPDOUBL|n|x;HI DOUBLE|n|x;CHORUS|n|x;MIX|r|a;DylTD_FM_4|r|a`;
const AUDIO = '<svg width="8" height="6"><path d="M0 0h2v1l6 2-6 2v1H0z" fill="#555"/></svg>';
const AUX = '<svg width="8" height="8"><path d="M3 0h2v4h3L4 8 0 4h3z" fill="#3f6e30"/></svg>';
$('trackList').innerHTML = LIST.split(';').map(row => {
  const [name, col, kind, st] = row.split('|');
  return `<li class="${st === 'o' ? 'off' : st === 's' ? 'sel' : ''}"><i class="dot"></i><i class="tag" style="background:${C[col]}"></i>${kind === 'x' ? AUX : AUDIO}<span>${name}</span></li>`;
}).join('');

/* ---------- groups ---------- */
$('groupList').innerHTML = [['!', '<em>&lt;ALL&gt;</em>', '#5a3fe0'], ['d', 'FX', '#701818'], ['a', 'ALL IMPORTS', '#1c5058'], ['b', 'ALL DAY VOX', '#2c5018'], ['c', 'MAIN DBL', '#181860'], ['e', 'TCE', '#185030']]
  .map(([k, n, c], i) => `<li>${i ? '<span></span>' : '<i class="ring"></i>'}<i style="background:${c}"></i><span>${k}</span><span>${n}</span></li>`).join('');

/* ---------- clip list ---------- */
const kick = '02 05 06 08 10 12 15 16 17 18 19 21 23 24 26 27 29 30 32 33 35 36 37 38 39 40 41 42 43 44 45 47 48 49 50 51 52 53 55 56 58 59 60 61'.split(' ');
const gtr = '02 03 04 05 06 08 09 10 11 12 14 15 16 17 18 19 20 21 22 24 25 26 28 29 30 32 34 35 40 40 40 40 40 40 41 42 44 46 47 48 49 50 52 54 55 56 57 58 59 60 61 62 63 64 65 66 67 68 69 70 71 72 73 75 76'.split(' ');
const clipNames = ['*10KICK', ...kick.map(n => '10KICK-' + n), '*10KICK-VariFi_01', '*10KICK-VariFi_03', '*10KICK-VariFi_04', '*14GTR 1', ...gtr.map(n => '14GTR 1-' + n)];
$('clipList').innerHTML = clipNames.map(n => `<li class="${n[0] === '*' ? 'whole' : ''}">${AUDIO}<span>${n.replace('*', '')}</span></li>`).join('');

/* ---------- rulers ---------- */
let h = '';
for (let b = 1; b < 56; b += 2) h += `<span style="left:${pct(b - 1)}">${b}</span>`;
$('bars').innerHTML = h + `<svg class="start-arrow" style="left:${pct(11.9)}" width="14" height="17"><path d="M4 1h6v7h3l-6 8-6-8h3z" fill="#7da6dc" stroke="#1d3050"/></svg><svg class="start-arrow" style="left:${pct(6.1)}" width="10" height="17"><path d="M3 16V3h4v4" fill="none" stroke="#111" stroke-width="2"/><path d="M5 2h3v4H5z" fill="#fff"/></svg>`;
h = '';
for (let i = 0; i < 18; i++) h += `<span style="left:${pct(i * 3.125)}">${Math.floor(i / 12)}:${String(i * 5 % 60).padStart(2, '0')}</span>`;
$('times').innerHTML = h;
$('rulers').insertAdjacentHTML('beforeend', `<i class="playhead" style="left:${pct(2.7)}"></i>`);

/* ---------- universe overview ---------- */
const U = [];
const ub = (y, c, spans) => spans.forEach(([a, b]) => U.push(`<rect x="${a}" y="${y}" width="${b - a}" height="2" fill="${c}"/>`));
const RED = '#b3493d';
[8, 10].forEach(y => ub(y, RED, [[1, 1595], [1614, 2079]]));
ub(7, '#8f3a31', [[1, 1595]]);
ub(12, RED, [[1, 117], [117, 370], [487, 1111], [1119, 1413], [1472, 1595], [1614, 1964]]);
U.push('<rect x="1" y="12" width="117" height="3" fill="#b9a3a0"/><rect x="370" y="12" width="117" height="3" fill="#b9a3a0"/>');
ub(14, RED, [[118, 370], [487, 1111], [1119, 1413], [1472, 1595], [1614, 1964]]);
[16, 18, 20].forEach((y, i) => ub(y, i === 1 ? '#983c32' : RED, [[1, 1595], [1614, 2064 + i * 10]]));
ub(24, '#a1487e', [[116, 1111], [1124, 1595], [1614, 2093]]);
ub(27, '#8f8b35', [[1, 128]]);
ub(30, '#5a45dd', [[122, 764], [1069, 1254], [1614, 2150]]);
ub(33, '#5a45dd', [[129, 132], [143, 156], [167, 177], [179, 185], [189, 195], [200, 218], [230, 251], [372, 380], [387, 403], [410, 430], [434, 441], [446, 470], [475, 487], [491, 504], [508, 523], [533, 552], [557, 565], [568, 592], [599, 616], [734, 767], [771, 798], [802, 845], [849, 860], [862, 894], [898, 951], [954, 982], [985, 1030], [1033, 1044], [1047, 1058], [1073, 1115], [1223, 1385], [1389, 1411], [1477, 1568], [1574, 1595], [1721, 1727], [1737, 1751], [1761, 1844]]);
ub(36, '#5a45dd', [[230, 383], [598, 772], [1078, 1390], [1574, 1595], [1614, 1764]]);
$('universe').innerHTML = `<svg viewBox="0 0 2166 39" preserveAspectRatio="none"><rect width="2166" height="39" fill="#9a9a98"/><rect width="2166" height="5" fill="#9dc4d8"/><rect y="5" width="2166" height="1" fill="#4a6470"/>${U.join('')}<path d="M834 6h1332v33H834z" fill="#000" opacity=".3"/><path d="M834 6v33" stroke="#ddd"/><path d="M0 0h2v5H0z" fill="#e6c63c"/></svg>`;

/* ---------- waveforms ---------- */
const TOP = 18, LOW = 54, H = 73;
const rect = (x, w, y = 0, hh = H) => `M${x.toFixed(1)} ${y}h${w.toFixed(1)}v${hh}h${(-w).toFixed(1)}z`;
function each(a, b, step, first, fn) {
  let d = '';
  for (let t = first; t < b; t += step) if (t >= a - 0.4) d += fn((t - a) * BAR);
  return d;
}
const waves = {
  kick(a, b) {
    let d = '';
    const pat = [[0, 4], [1.74, 7], [3.06, 5], [3.66, 8], [5.06, 4], [5.56, 4], [6.67, 5]];
    for (let base = 9; base < 57; base += 8) for (const [o, w] of pat) {
      const t = base + o;
      if (t >= a && t < b) d += rect((t - a) * BAR, w);
    }
    return d;
  },
  clap: (a, b) => each(a, b, 1, 1.46, x => rect(x, 3) + `M${x + 3} 14l1 4-1 4zM${x + 3} 50l1 4-1 4z`),
  hat: (a, b) => each(a, b, 0.5, 1.22, x => rect(x, 2) + `M${x + 2} 12l1 6-1 6zM${x + 2} 48l1 6-1 6z`),
  dense(a, b) {
    let d = '', i = 0;
    for (let t = a + 0.1; t < b; t += 0.13, i++) d += rect((t - a) * BAR, i % 9 === 4 ? 3.7 : 2.6);
    for (let base = 1; base < 57; base += 8) for (const [s, e] of [[-0.5, 0], [0, 0.5], [2.2, 2.4], [3.7, 4], [6, 6.15]]) {
      const x = Math.max(base + s, a + 0.15), y = Math.min(base + e, b);
      if (y > x) d += rect((x - a) * BAR, (y - x) * BAR);
    }
    return d;
  },
  oh: (a, b) => each(a, b, 2, 1, x => rect(x, 2) + [TOP, LOW].map(c => `M${x + 1} ${c - 18}q1 12 3 13l3 2 6 3-6 3-3 2q-2 1-3 13z`).join('')),
  perc(a, b) {
    let d = '';
    for (let base = 1; base < 57; base += 8) for (const o of [3, 3.5, 6.5, 7]) {
      const x = (base + o - a) * BAR;
      if (x > -14 && base + o < b) d += rect(x, 3) + [TOP, LOW].map(c => `M${x + 1} ${c - 18}q3 12 6 14l5 4-5 4q-3 2-6 14z`).join('');
    }
    return d;
  },
  flat: () => '',
  solid: (a, b) => rect(0, (b - a) * BAR)
};
// ragged fade of both channels from bar s to bar e
function decay(s, e) {
  const x0 = s * BAR, w = (e - s) * BAR;
  return [TOP, LOW].map(c => {
    let up = '', dn = '';
    for (let i = 0; i <= 14; i++) {
      const amp = 18.5 * Math.exp(-i / 5) * (1 - i / 16) + (i % 2) * 1.2, x = (x0 + w * i / 14).toFixed(1);
      up += `L${x} ${(c - amp).toFixed(1)}`;
      dn = `L${x} ${(c + amp).toFixed(1)}` + dn;
    }
    return `M${x0} ${c - 18}${up}${dn}z`;
  }).join('');
}
function clip(colour, kind, a, b, name, o = {}) {
  b = Math.min(b, BARS + 1);
  const w = (b - a) * BAR;
  let d = waves[kind](a, b), extra = '';
  if (o.decay) d = rect(0, (o.decay - a) * BAR) + decay(o.decay - a, b - a);
  if (kind === 'dense' && !o.muted) extra += `<path class="band" d="M3 16h${w}v5H3zM3 52h${w}v5H3z"/>`;
  for (const [s, e] of o.light || []) {
    const x = (s - a) * BAR, ww = (e - s) * BAR;
    extra += `<path class="lt" d="M${x} 0h${ww - 1}l1 18-1 18 1 18-1 19h${1 - ww}z"/><path class="chan" d="M${x} ${TOP}h${ww}M${x} ${LOW}h${ww}"/>`;
  }
  for (const [s, e] of o.slit || []) {
    const x = s * w, ww = (e - s) * w;
    extra += `<path class="lt" d="M${x} 0h${ww}l-1 30h${-ww * 0.6}zM${x + ww * .3} 43h${ww * .6}l1 30h${-ww}z"/>`;
  }
  for (const [s, e] of o.blob || []) {
    const x = (s - a) * BAR, y = (e - a) * BAR, q = (y - x) / 3;
    extra += `<path class="lt" d="M${x} 36l${q} -8 ${q} -2V25L${y} 23V49l${-q} -2v-2l${-q} -2zM${x + q} 0H${y}V14l-3-6-3 1zM${x} 73l${q} -6 3-2L${y} 60v13z"/>`;
  }
  for (const [s, e] of o.notch || []) {
    const x = (s - a) * BAR, ww = (e - s) * BAR, n = ww / 6;
    extra += `<path class="lt" d="M${x} 0h${ww}l${-n} 7 ${-n} -3 ${-n} 7 ${-n} -3 ${-n} 5z"/>`;
  }
  if (o.fadeIn) extra += `<path class="lt" d="M0 0h${o.fadeIn * BAR}v73H0z"/><path d="M0 73L${o.fadeIn * BAR} 0M${o.fadeIn * BAR} 0v73M0 18h6M0 54h6" stroke="#222"/>`;
  if (o.fadeOut) extra += `<path class="lt" d="M${w - o.fadeOut * BAR} 0H${w}v73H${w - o.fadeOut * BAR}z"/><path class="chan" d="M${w - o.fadeOut * BAR} 19H${w}"/>`;
  const lines = kind === 'solid' || kind === 'dense' ? '' : `<path class="chan" d="M0 ${TOP}.5H${w}M0 ${LOW}.5H${w}"/>`;
  return `<div class="clip ${colour}${o.muted ? ' muted' : ''}" style="left:${pct(a - 1)};width:${pct(b - a)}"><svg viewBox="0 0 ${w.toFixed(1)} 73" preserveAspectRatio="none">${lines}<path d="${d}"/>${extra}${o.slit ? '' : `<path class="mid" d="M0 36.5H${w}"/>`}</svg>${name ? `<b>${name}</b>` : ''}${o.db ? `<b class="gain">${o.db}</b>` : ''}</div>`;
}
const DB = { db: '0 dB' }, M = { muted: true }, END = 56;
const G = (...r) => r.map(x => clip(...x)).join('');
const lanes = [
  G(['red', 'kick', 1, 40, 'KICK-22', DB], ['red', 'flat', 40, 41, 'KICK', M], ['red', 'kick', 41, END, 'KICK-25', DB]),
  G(['red', 'clap', 1, 8.16, 'clap-13', DB], ['red', 'clap', 8.16, 8.8, 'cla', M], ['red', 'clap', 8.8, 24.23, 'clap-16', DB], ['red', 'clap', 24.23, 25, 'cla', M], ['red', 'clap', 25, 40, 'clap-19', DB], ['red', 'clap', 40, 41, 'clap', M], ['red', 'clap', 41, 52, 'clap-22', DB], ['red', 'clap', 52, 53, 'clap', M], ['red', 'clap', 53, END, 'clap-25', DB]),
  G(['red', 'hat', 1, 24.23, 'HH2-17', DB], ['red', 'hat', 24.23, 25, 'HH', M], ['red', 'hat', 25, 41, 'HH2-20', DB], ['red', 'hat', 41, 52, 'HH2-23', DB], ['red', 'hat', 52, 53, 'HH2', M], ['red', 'hat', 53, END, 'HH2-26', DB]),
  G(['red', 'flat', 8.64, 8.8], ['red', 'dense', 8.8, 24.23, 'HH3-21', DB], ['red', 'solid', 24.23, 25.1, 'HH', M], ['red', 'dense', 32.75, 41, 'HH3-24', DB], ['red', 'dense', 41, 52, 'HH3-27', DB], ['red', 'dense', 52, 53, 'HH3', M], ['red', 'dense', 53, END, 'HH3-30', DB]),
  G(['red', 'oh', 1, 24.23, 'OH COMBO-13', DB], ['red', 'flat', 24.23, 25, 'OH', M], ['red', 'oh', 25, 40, 'OH COMBO-16', DB], ['red', 'flat', 40, 41, 'OH C', M], ['red', 'oh', 41, 52, 'OH COMBO-19', DB], ['red', 'flat', 52, 53, 'OH C', M], ['red', 'oh', 53, END, 'OH COMBO-22', DB]),
  G(['red', 'perc', 1, 3, 'perc-01', DB], ['red', 'perc', 3, 5.2, 'perc-02', DB], ['red', 'perc', 5.2, 9, 'perc-04', DB], ['red', 'perc', 9, 11, 'perc-01', DB], ['red', 'perc', 11, 13.17, 'perc-02', DB], ['red', 'perc', 13.17, 17, 'perc-04', DB], ['red', 'perc', 17, 19, 'perc-01', DB], ['red', 'perc', 19, 21.17, 'perc-02', DB], ['red', 'perc', 21.17, 24.23, 'perc-19', DB], ['red', 'perc', 24.23, 25, 'per', M], ['red', 'perc', 25, 27, 'perc-01', DB], ['red', 'perc', 27, 29.12, 'perc-02', DB], ['red', 'perc', 29.12, 33, 'perc-04', DB], ['red', 'perc', 33, 35, 'perc-01', DB], ['red', 'perc', 35, 37.15, 'perc-02', DB], ['red', 'perc', 37.15, 40.16, 'perc-22', DB], ['red', 'perc', 40.16, 41, 'per', M], ['red', 'perc', 41, 43, 'perc-01', DB], ['red', 'perc', 43, 45.16, 'perc-02', DB], ['red', 'perc', 45.16, 49, 'perc-04', DB], ['red', 'perc', 49, 51, 'perc-01', DB], ['red', 'perc', 51, 52, 'perc'], ['red', 'perc', 52, 53.2, 'perc', M], ['red', 'perc', 53.2, END, 'perc-04', DB]),
  '<div class="fader" style="top:30px"></div>',
  G(['magenta', 'flat', 8.57, 8.97, '', { fadeIn: 0.4 }], ['magenta', 'solid', 8.97, 24.23, '808-39', { db: '0 dB', light: [[15.07, 15.52], [23.03, 23.5]] }], ['magenta', 'solid', 24.23, 25, '808', M], ['magenta', 'solid', 25, 39.48, '808-42', { db: '0 dB', light: [[31.03, 31.5], [39.03, 39.48]] }], ['magenta', 'solid', 39.48, 41, '808-43', DB], ['magenta', 'solid', 41, 43, '808-28', { muted: true, db: '0 dB' }], ['magenta', 'solid', 43, 45, '808-30', DB], ['magenta', 'solid', 45, 46, '808-', M], ['magenta', 'solid', 46, 47.1, '808-3'], ['magenta', 'solid', 47.1, 49, '808-33', { db: '0 dB', light: [[47.1, 47.52]] }], ['magenta', 'solid', 49, 52, '808-44', DB], ['magenta', 'solid', 52, 53, '808-', M], ['magenta', 'solid', 53, END, '808-47', { db: '0 dB', light: [[55.08, 56]] }]),
  G(['olive', 'solid', 1, 9.33, 'INTRO GTR PRINT_01-02', { db: '0 dB', blob: [[1.88, 2.47], [3.9, 4.46], [5.92, 6.45], [7.86, 7.98], [8.93, 9.33]] }]),
  G(['purple', 'flat', 8.88, 9.3, '', { fadeIn: 0.42 }], ['purple', 'solid', 9.3, 24.23, 'REVERSE GTR $$$-15', DB], ['purple', 'solid', 24.23, 25, 'RE', M], ['purple', 'solid', 25, 50.78, 'REVERSE GTR $$$-17', { db: '0 dB', decay: 49.6 }]),
  G(...[[9.32, 9.63], [10.31, 10.87, '14', [[.25, .4]]], [10.87, 11.1], [11.82, 12.21], [12.21, 12.46, '', [[.1, .5]]], [12.48, 12.98, '14'], [13.29, 13.65], [14.06, 14.63, '14', [[.65, .95]]], [14.63, 15.17, '', [[.4, .55], [.8, .95]]], [16, 17.34, '14GTR', [[.2, .25], [.34, .38], [.72, 1]], '0 dB'],
    [25.24, 25.72, '1', [[.8, 1]]], [26.17, 26.83, '14', [[0, .15], [.5, .65]]], [26.83, 27.28, '1', [[.6, 1]]], [27.68, 28.2, '1'], [28.2, 28.45, '', [[.1, .6]]], [28.45, 28.97, '14'], [29.2, 29.76, '14', [[.1, .2], [.6, .9]]], [29.97, 30.52, '1', [[.8, 1]]], [30.52, 30.92, '1', [[0, .15]]], [30.92, 31.64, '14', [[.2, 1]]], [31.99, 32.29], [32.29, 32.5, '', [[.2, .5]]], [32.5, 32.94, '1'], [33.2, 33.77, '14', [[0, .15], [.8, 1]]], [34.08, 35.12, '14GT', [[0, .15], [.35, .48]]], [35.71, 36.33, '1'], [36.33, 36.49, '', [[.1, .5]]], [36.49, 36.96, '1'], [37.26, 37.82, '', [[.3, .9]]], [38.05, 38.54, '1', [[.7, 1]]], [38.54, 38.89], [38.89, 39.56, '', [[.35, 1]]], [40.05, 40.3], [40.3, 41.12, '14G', [[0, .15], [.8, 1]]], [48.8, 50.96, '14GTR 1-97', [[.05, .2], [.5, .6], [.85, 1]], '-3.0 dB'], [51.24, 52.01, '14G', [[0, .15], [.65, 1]]]]
    .map(([a, b, n, slit, db]) => ['purple', 'solid', a, b, n, { slit: slit || [], db }]),
    ['purple', 'solid', 52.01, 53.06, '14G', { muted: true, slit: [[0, .3], [.6, .7]] }], ['purple', 'solid', 53.33, 55.14, '14GTR 1-', { db: '-3.0 dB', slit: [[.3, .4], [.7, .8]] }], ['purple', 'solid', 55.26, END, '', { slit: [] }]),
  G(['purple', 'solid', 16, 18.29, 'GTR 2 $$$-27', { db: '0 dB', light: [[16, 16.91]] }], ['purple', 'solid', 18.29, 20.32, 'GTR 2 $$$-', DB], ['purple', 'solid', 20.32, 20.97, 'GT'], ['purple', 'solid', 20.97, 22.3, 'GTR 2', DB], ['purple', 'solid', 22.3, 22.98, 'GT'], ['purple', 'solid', 22.98, 24.23, 'GTR 2', DB], ['purple', 'solid', 24.23, 25, 'GT', M], ['purple', 'solid', 25, 25.92, 'GTR', { decay: 25.4 }],
    ['purple', 'solid', 39.95, 44.32, 'GTR 2 $$$-32', { db: '0 dB', light: [[39.95, 40.91]] }], ['purple', 'solid', 44.32, 44.97, 'GT'], ['purple', 'solid', 44.97, 46.3, 'GTR 2', DB], ['purple', 'solid', 46.3, 46.95, 'GT'], ['purple', 'solid', 46.95, 47.41, 'G'], ['purple', 'solid', 47.41, 47.87], ['purple', 'solid', 47.87, 51.34, 'GTR 2 $$$-39', { db: '0 dB', decay: 49.43 }]),
  '',
  '<div class="fader" style="top:9px"></div>',
  G(['blue-clip', 'solid', 1, 9.72, 'pad reverse-10', { notch: [[5, 5.7], [7, 7.8]], fadeOut: 0.7 }], ['blue-clip', 'solid', 16.79, 24.23, 'pad reverse-18', { notch: [[19.3, 19.8], [21, 21.7], [23, 23.7]] }], ['blue-clip', 'solid', 24.23, 25, 'pad', M], ['blue-clip', 'flat', 25, 25.63, 'pa'], ['blue-clip', 'solid', 32.82, 41.65, 'pad reverse-14', { notch: [[35.3, 35.7], [37, 37.7], [39, 39.8]], fadeOut: 0.65 }], ['blue-clip', 'solid', 49, 52, 'pad reverse-21', { notch: [[50.8, 51.4]] }], ['blue-clip', 'solid', 52, 53, 'pad', M], ['blue-clip', 'solid', 53, END, 'pad reverse-24'])
];

/* ---------- tracks ---------- */
// a leading * marks an active level meter on the slot, ~ an inactive one
const S = { r: '#c03324', m: '#b83a98', p: '#6044f0', b: '#3c6cf2', k: '#232323' };
const TRACKS = [
  ['KICK SUB', 'r', '*bx_cnslS,Pro-Q 3', '', '', 'VIRTUAL 7-8', 'DRUMS', '-9.3', 'plain'],
  ['CLAP', 'r', '*bx_cnslS,Pro-Q 3', '', '*DVERBLO,*NLR', 'TALKBACK 1-2', 'DRUMS', '+11.4'],
  ['HH1', 'r', '*bx_cnslS', '', '*DVERBLO', 'VIRTUAL 1-2', 'DRUMS', '+4.2'],
  ['HH2', 'r', '*bx_cnslS,Pro-Q 3,Enigma', '', '*DVERBLO', 'VIRTUAL 3-4', 'DRUMS', '+7.8'],
  ['OH', 'r', '*bx_cnslS', '', '*DVERBLO,*WEIRDVE', 'MON L/R', 'DRUMS', '-9.9'],
  ['PERC', 'r', '*bx_cnslS,Pro-Q 3', '', '*DVERBLO,*WEIRDVE,*1/4DELAY', 'MIC/LINE/HIZ12', 'DRUMS', '+1.2'],
  ['DRUMS BUS', 'k', '*bx_cnslS,Pro-Q 3,*API-2500', '', '', 'DRUMS', 'BEAT AUX', '-8.5', 'bus'],
  ['808', 'm', '*bx_cnslS,Pro-Q 3,RBass,Pro-Q 3', 'StereoWidth', '', 'MIC/LINE 3-4', 'BEAT AUX', '-13.7'],
  ['INTROGTRPRIN', 'k', '', '', '', 'INTRO GTR', 'GTR BUS', '-2.0', 'plain'],
  ['REVERSE GTR', 'p', '*bx_cnslS,NS1,Fchild670L,Pro-Q 3', '', '*DVERBLO,*WEIRDVE,*HIDOUBL', 'AUX1 L/R', 'GTR BUS', '-17.2'],
  ['GTR 1 DRY', 'p', '*bx_cnslS,J37,GTRTolRck,Pro-Q 3', 'VSC,EchoBoy,Decapitator,CurveBendr', '*DVERBLO,*WEIRDVE,*NLR,*DEPDOU', 'ADAT 7', 'GTR BUS', '-18.2'],
  ['GTR 2', 'p', '*bx_cnslS,Pro-Q 3,1176LN L', '', '~DVERBLON,~WEIRDVER', 'ADAT 5-6', 'GTR BUS', '-12.4'],
  ['GTR 3 DRY', 'p', '*bx_cnslS,NS1,GTRTolRck,Pro-Q 3', '~VSC,EchoBoy,Decapitator,MondoMod', '*DVERBLO,*WEIRDVE', 'ADAT 8', 'GTR BUS', '-17.2'],
  ['GTR BUS', 'k', '*bx_cnslS', '', '', 'GTR BUS', 'BEAT AUX', '+6.0', 'bus'],
  ['REV PAD', 'b', '*bx_cnslS,Pro-Q 3', '', '*DVERBLO,*WEIRDVE', 'MIC/LINE/HIZ12', 'INST BUS', '-6.0']
];
function slots(list, marks, send) {
  const v = list ? list.split(',') : [];
  return '<div class="cell">' + marks.map((m, i) => {
    const s = v[i] || '', c = !s ? '' : s[0] === '~' ? ' inactive' : s[0] === '*' ? ' used metered' : ' used';
    return `<button class="slot${c}${send ? ' send' : ''}"><i>${m}</i><span>${s.replace(/[*~]/, '')}</span></button>`;
  }).join('') + '</div>';
}
const dots = ['•', '•', '•', '•'];
const clock = '<svg width="9" height="9"><circle cx="4.5" cy="4.5" r="3.5" fill="none" stroke="#26306e" stroke-width="2"/><path d="M4 3v2h2" stroke="#26306e" fill="none"/></svg>';
const foot = '<svg width="8" height="10"><path d="M4 0v8M0 9h8" stroke="#444"/><path d="M2 9l2-6 2 6z" fill="#555"/></svg>';
$('tracks').innerHTML = TRACKS.map(([name, col, ia, ib, sa, inp, out, vol, kind], i) => {
  const bus = kind === 'bus';
  const auto = bus
    ? `<select class="view" aria-label="Track view"><option>vol ▾</option></select><select class="mode" aria-label="Automation"><option>rd▾</option></select><button class="elastic dim blank">${foot}</button>`
    : `<button class="view">wave</button><button class="mode">read</button><button class="elastic${kind ? ' dim' : ''}" aria-label="Elastic audio">${foot}</button>`;
  return `<article class="track">
    <div class="strip" style="background:${S[col]}"></div>
    <div class="head">
      <div class="name"><span>${name}</span><button class="${bus ? 'none' : kind || ''}" aria-label="Playlist"></button></div>
      <div class="rec-row">${bus ? '<button class="dim"></button><button class="dim"></button><button class="dim">S</button>' : '<button class="rec" aria-label="Record"></button><button>I</button><button>S</button>'}<button>M</button></div>
      <div class="auto-row"><button class="ic">${clock}</button><button class="ic">✻</button>${auto}</div>
    </div>
    <div class="meters"><i></i><i></i><i></i></div>
    <div class="cell void"></div>
    ${slots(ia, dots)}${slots(ib, dots)}${slots(sa, ['a', 'b', 'c', 'd'], true)}${slots('', ['f', 'g', 'h', 'i'], true)}
    <div class="cell io">
      <label><select aria-label="Input"><option>${inp}</option></select></label>
      <label class="out"><select aria-label="Output"><option>${out}</option></select></label>
      <div class="level-box"><span>vol</span><span>${vol}</span><span><small>◀</small> 100</span><span>100 <small>▶</small></span></div>
    </div>
    <div class="scale"></div>
    <div class="lane">${lanes[i]}</div>
  </article>`;
}).join('');
```
